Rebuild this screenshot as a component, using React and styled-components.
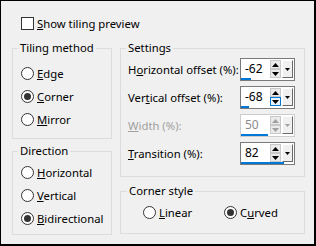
import React from 'react'
import styled, { createGlobalStyle } from 'styled-components'

const GlobalStyle = createGlobalStyle`
  html, body {
    margin: 0;
    padding: 0;
    background: #f0f0f0;
  }
  body {
    font-family: 'Noto Sans', 'Open Sans', sans-serif;
    font-size: 11.3px;
    color: #000;
    white-space: nowrap;
  }
`

const Dialog = styled.div`
  box-sizing: border-box;
  width: 316px;
  height: 246px;
  background: #f0f0f0;
  border-style: solid;
  border-color: #000;
  border-width: 1px 2px 2px 1px;
  padding: 11px 0 0 11px;
  display: flex;
  flex-direction: column;
  gap: 5px;
`

const CheckRow = styled.label`
  display: flex;
  align-items: center;
  gap: 3px;
  height: 23px;
  margin-left: 9px;
`

const CheckBox = styled.span`
  box-sizing: border-box;
  width: 13px;
  height: 13px;
  border: 1px solid #333;
  background: #fff;
`

const Columns = styled.div`
  display: flex;
  gap: 8px;
`

const Column = styled.div`
  width: ${p => p.$w}px;
  display: flex;
  flex-direction: column;
  gap: ${p => p.$gap}px;
`

const Group = styled.div`
  box-sizing: border-box;
  margin-top: 8px;
  height: ${p => p.$h}px;
  border: 1px solid #dcdcdc;
  padding: 0 ${p => p.$pr ?? 8}px 0 ${p => p.$pl ?? 8}px;
  display: flex;
  flex-direction: column;
`

const Title = styled.div`
  align-self: flex-start;
  margin: -9px 0 0 ${p => p.$dx}px;
  padding: 0 2px;
  height: 16px;
  line-height: 16px;
  background: #f0f0f0;
`

const Body = styled.div`
  padding-top: ${p => p.$pt}px;
  display: flex;
  flex-direction: column;
  gap: ${p => p.$gap ?? 0}px;
`

const RadioRow = styled.div`
  display: flex;
  padding-left: ${p => p.$pl ?? 0}px;
`

const Option = styled.label`
  display: flex;
  align-items: center;
  gap: 3px;
  height: 23px;
  width: ${p => (p.$w ? `${p.$w}px` : 'auto')};
`

const Circle = styled.span`
  box-sizing: border-box;
  flex: none;
  width: 13px;
  height: 13px;
  border: 1px solid #333;
  border-radius: 50%;
  background: #fff;
  display: flex;
  align-items: center;
  justify-content: center;
  &::after {
    content: '';
    width: 7px;
    height: 7px;
    border-radius: 50%;
    background: ${p => (p.$checked ? '#333' : 'transparent')};
  }
`

const Field = styled.div`
  display: flex;
  align-items: center;
  justify-content: space-between;
  height: 23px;
  color: ${p => (p.$disabled ? '#a0a0a0' : '#000')};
`

const SpinBox = styled.div`
  box-sizing: border-box;
  flex: none;
  width: 55px;
  height: 23px;
  border: 1px solid ${p => (p.$disabled ? '#cccccc' : '#7a7a7a')};
  background: #fff;
  display: flex;
  flex-direction: column;
`

const SpinTop = styled.div`
  display: flex;
  height: 19px;
`

const Value = styled.div`
  flex: 1;
  padding-left: 4px;
  line-height: 20px;
  font-size: 12px;
  color: ${p => (p.$disabled ? '#8c8c8c' : '#000')};
`

const Arrows = styled.div`
  box-sizing: border-box;
  width: 11px;
  margin-top: 1px;
  display: flex;
  flex-direction: column;
`

const ArrowBtn = styled.div`
  box-sizing: border-box;
  flex: 1;
  border: 1px solid ${p => (p.$hot ? '#0078d7' : '#c8c8c8')};
  background: ${p => (p.$hot ? '#e5f1fb' : '#eaeaea')};
  display: flex;
  align-items: center;
  justify-content: center;
`

const DropBtn = styled.div`
  box-sizing: border-box;
  width: 11px;
  margin: 1px 1px 0 1px;
  border-style: solid;
  border-width: 1px;
  border-color: #ffffff #696969 #696969 #ffffff;
  background: #f0f0f0;
  display: flex;
  align-items: center;
  justify-content: center;
`

const Track = styled.div`
  height: 2px;
`

const Fill = styled.div`
  height: 2px;
  background: #0078d7;
`

const Tri = ({ up, color, w = 5, h = 3 }) => (
  <svg width={w} height={h} viewBox={`0 0 ${w} ${h}`}>
    <path
      d={up ? `M0 ${h} L${w / 2} 0 L${w} ${h} Z` : `M0 0 L${w / 2} ${h} L${w} 0 Z`}
      fill={color}
    />
  </svg>
)

const mn = (text, i) => (
  <span>
    {text.slice(0, i)}
    <u>{text[i]}</u>
    {text.slice(i + 1)}
  </span>
)

const Radio = ({ label, checked, w }) => (
  <Option $w={w}>
    <Circle $checked={checked} />
    {label}
  </Option>
)

const Spin = ({ value, min, max, disabled, hotDown }) => {
  const glyph = disabled ? '#a0a0a0' : '#000'
  const pct = ((value - min) / (max - min)) * 53
  return (
    <SpinBox $disabled={disabled}>
      <SpinTop>
        <Value $disabled={disabled}>{value}</Value>
        <Arrows>
          <ArrowBtn>
            <Tri up color={glyph} w={7} h={4} />
          </ArrowBtn>
          <ArrowBtn $hot={hotDown}>
            <Tri color={glyph} w={7} h={4} />
          </ArrowBtn>
        </Arrows>
        <DropBtn>
          <Tri color={glyph} />
        </DropBtn>
      </SpinTop>
      <Track>
        <Fill style={{ width: `${pct}px` }} />
      </Track>
    </SpinBox>
  )
}

export default function App() {
  return (
    <>
      <GlobalStyle />
      <Dialog>
        <CheckRow>
          <CheckBox />
          {mn('Show tiling preview', 0)}
        </CheckRow>
        <Columns>
          <Column $w={100} $gap={4}>
            <Group $h={91}>
              <Title $dx={-3}>Tiling method</Title>
              <Body $pt={6}>
                <Radio label={mn('Edge', 0)} />
                <Radio label={mn('Corner', 0)} checked />
                <Radio label={mn('Mirror', 0)} />
              </Body>
            </Group>
            <Group $h={84}>
              <Title $dx={-3}>Direction</Title>
              <Body $pt={2}>
                <Radio label={mn('Horizontal', 0)} />
                <Radio label={mn('Vertical', 0)} />
                <Radio label={mn('Bidirectional', 0)} checked />
              </Body>
            </Group>
          </Column>
          <Column $w={185} $gap={6}>
            <Group $h={129} $pl={7} $pr={9}>
              <Title $dx={-2}>Settings</Title>
              <Body $pt={2} $gap={5}>
                <Field>
                  {mn('Horizontal offset (%):', 1)}
                  <Spin value={-62} min={-100} max={100} />
                </Field>
                <Field>
                  {mn('Vertical offset (%):', 3)}
                  <Spin value={-68} min={-100} max={100} hotDown />
                </Field>
                <Field $disabled>
                  {mn('Width (%):', 0)}
                  <Spin value={50} min={0} max={100} disabled />
                </Field>
                <Field>
                  {mn('Transition (%):', 0)}
                  <Spin value={82} min={0} max={100} />
                </Field>
              </Body>
            </Group>
            <Group $h={43} $pl={7}>
              <Title $dx={-1}>Corner style</Title>
              <Body $pt={2}>
                <RadioRow $pl={15}>
                  <Radio label={mn('Linear', 0)} w={81} />
                  <Radio label={mn('Curved', 1)} checked />
                </RadioRow>
              </Body>
            </Group>
          </Column>
        </Columns>
      </Dialog>
    </>
  )
}
